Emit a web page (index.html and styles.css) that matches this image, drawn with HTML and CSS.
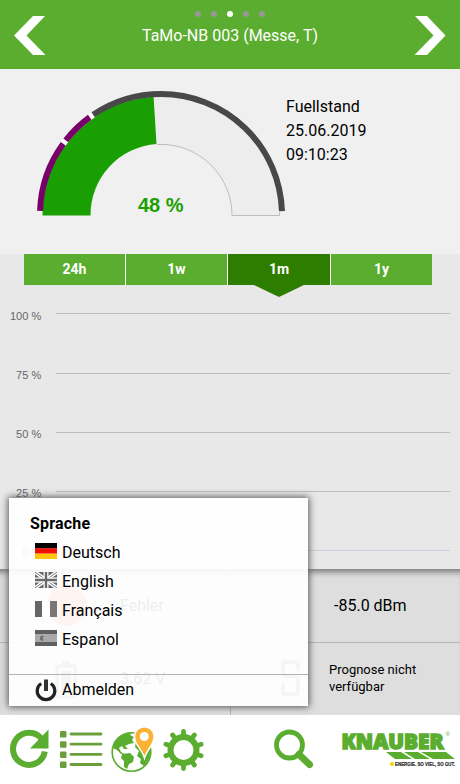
FILE: index.html
```html
<!DOCTYPE html>
<html lang="de">
<head>
<meta charset="utf-8">
<title>TaMo-NB 003</title>
<link rel="stylesheet" href="styles.css">
</head>
<body>
<header class="top">
  <svg class="arrow" viewBox="0 0 32 39"><path d="M19 0H31L12.500 19.500 31.500 39H19L0 19.500Z"/></svg>
  <div class="heading">
    <div class="dots"><i></i><i></i><i class="on"></i><i></i><i></i></div>
    <h1>TaMo-NB 003 (Messe, T)</h1>
  </div>
  <svg class="arrow" viewBox="0 0 32 39"><path d="M13 0H1L19.500 19.500 .5 39H13L31.500 19.500Z"/></svg>
</header>
<section class="level">
  <svg class="gauge" viewBox="0 0 256 140">
    <path d="M242 130A118 118 0 0 0 116.600 12.200L119.500 59.100A71 71 0 0 1 195 130.500H242" fill="#ededed"/>
    <path d="M120 59.500A71 71 0 0 1 195 130.500H242.500V127" fill="none" stroke="#bdbdbd"/>
    <path d="M5.500 130A118.500 118.500 0 0 1 116.600 11.700L119.500 59.100A71 71 0 0 0 53.500 130V130.500H5.500Z" fill="#1a9f02"/>
    <g fill="none" stroke-width="6">
      <path class="gap" d="M3 130A121 121 0 0 1 245 130" pathLength="180" stroke-dasharray="0 35 22 200"/>
      <path class="low" d="M3 130A121 121 0 0 1 245 130" pathLength="180" stroke-dasharray="0 2 34.100 2 15.800 200"/>
      <path class="ok" d="M3 130A121 121 0 0 1 245 130" pathLength="180" stroke-dasharray="0 55.900 122.200 200"/>
    </g>
    <text x="123.700" y="127" text-anchor="middle" class="percent">48 %</text>
  </svg>
  <div class="stamp">Fuellstand<br>25.06.2019<br>09:10:23</div>
</section>
<section class="history">
  <nav class="tabs"><span>24h</span><span>1w</span><span class="active">1m</span><span>1y</span></nav>
  <svg class="chart" viewBox="0 0 460 284">
    <g stroke="#bcbcbc"><path d="M56 28.500H450M56 88.500H450M56 147.500H450M56 206.500H450"/><path d="M56 265.500H450" stroke="#c8cedb"/></g>
    <g class="scale" text-anchor="end"><text x="41.200" y="35">100 %</text><text x="41.200" y="94">75 %</text><text x="41.200" y="153">50 %</text><text x="41.200" y="212">25 %</text><text x="41.200" y="271">0 %</text></g>
  </svg>
</section>
<section class="status">
  <div class="cell"><svg class="lamp" viewBox="0 0 44 44"><circle cx="22" cy="22" r="20"/></svg><span>Fehler</span></div>
  <div class="cell signal"><span>-85.0 dBm</span></div>
  <div class="cell"><svg class="battery" viewBox="0 0 22 38"><path d="M2 5H20V36H2ZM7 2H15" fill="none" stroke="#777" stroke-width="3"/><path d="M6 10H16V32H6Z" fill="#777"/></svg><span>3.62 V</span></div>
  <div class="cell forecast"><svg class="loop" viewBox="0 0 20 36"><path d="M17 11V5Q17 2 14 2H5Q2 2 2 5V13Q2 16 5 16H14Q17 16 17 19V31Q17 34 14 34H5Q2 34 2 31V23" fill="none" stroke="#777" stroke-width="4"/></svg><span>Prognose nicht<br>verfügbar</span></div>
</section>
<aside class="menu">
  <div class="languages">
    <h2>Sprache</h2>
    <div class="item"><svg class="flag" viewBox="0 0 22 16"><path fill="#000" d="M0 0h22v5.500H0z"/><path fill="#f01008" d="M0 5.300h22v5.400H0z"/><path fill="#fdc60b" d="M0 10.700h22V16H0z"/></svg>Deutsch</div>
    <div class="item"><svg class="flag" viewBox="0 0 22 16"><path fill="#666" d="M0 0h22v16H0z"/><path stroke="#fff" stroke-width="3.600" d="M0 0 22 16M22 0 0 16"/><path stroke="#777" d="M0 0 22 16M22 0 0 16"/><path stroke="#fff" stroke-width="5" d="M11 0V16M0 8H22"/><path stroke="#686868" stroke-width="2.400" d="M11 0V16M0 8H22"/></svg>English</div>
    <div class="item"><svg class="flag" viewBox="0 0 22 16"><path fill="#fff" d="M7 0h8v16H7z"/><path fill="#666" d="M0 0h7v16H0z"/><path fill="#7a7675" d="M15 0h7v16h-7z"/></svg>Français</div>
    <div class="item"><svg class="flag" viewBox="0 0 22 16"><path fill="#a9a9a9" d="M0 0h22v16H0z"/><path fill="#606060" d="M0 0h22v4H0zM0 12h22v4H0z"/><path d="M8.500 6.500H6V10H8.500M5.500 8.300H8" fill="none" stroke="#555"/></svg>Espanol</div>
  </div>
  <div class="item logout"><svg class="power" viewBox="0 0 22 23"><path d="M6.200 4.500A8.800 8.800 0 1 0 15.800 4.500" fill="none" stroke="#222" stroke-width="3.200"/><path d="M11 .5V12" stroke="#333" stroke-width="4"/></svg>Abmelden</div>
</aside>
<footer class="bar">
  <svg class="tools" viewBox="0 0 330 69">
    <g fill="#5bad2f">
      <path d="M42 24.500A16 16 0 1 0 44.800 36.500" fill="none" stroke="#5bad2f" stroke-width="6"/>
      <path d="M48.500 14.500V33.500H30Z"/>
      <g fill="#6a9f3c"><rect x="60" y="16" width="6.500" height="6.500" rx="1"/><rect x="60" y="26.200" width="6.500" height="6.500" rx="1"/><rect x="60" y="36.400" width="6.500" height="6.500" rx="1"/><rect x="60" y="46.500" width="6.500" height="6.500" rx="1"/></g>
      <path d="M71 19H101M71 29.200H101M71 39.400H101M71 49.500H101" stroke="#6a9f3c" stroke-width="2.800" stroke-linecap="round"/>
      <circle cx="131.500" cy="37" r="19.300" fill="#fff" stroke="#5bad2f" stroke-width="1.600"/>
      <path d="M113 33C114 25 121 18 132 17.500L130 20 134 22 132 25 134 28 129 29 125 31 128 34 124 34 122 31 119 33 121 37 124 39 121 39 117 35Z"/>
      <path d="M122 39 130 38 134 42 133 47 129 49 127 54 124 52 124 46 121 43Z"/>
      <path d="M136 27 141 29 146 38 150 34Q151 44 144 51L140 48 141 44 137 41 139 36 135 32Z"/>
      <path d="M144.500 43C142 34 134.500 30 134.500 21.500A9.800 9.800 0 0 1 154.100 21.500C154.100 30 147 34 144.500 43Z" fill="#f9b233" stroke="#fff" stroke-width="1.500"/>
      <circle cx="144.300" cy="21.500" r="4.500" fill="#fff"/>
      <circle cx="183.500" cy="35" r="13" fill="none" stroke="#5bad2f" stroke-width="6"/>
      <g stroke="#5bad2f" stroke-width="4.800" stroke-linecap="round">
        <path id="tooth" d="M183.500 21V16.500M183.500 49V53.500"/>
        <use href="#tooth" transform="rotate(36 183.500 35)"/><use href="#tooth" transform="rotate(72 183.500 35)"/><use href="#tooth" transform="rotate(108 183.500 35)"/><use href="#tooth" transform="rotate(144 183.500 35)"/>
      </g>
      <circle cx="289.500" cy="30" r="13" fill="none" stroke="#5bad2f" stroke-width="4.800"/>
      <path d="M299 39.500 309.500 49.500" stroke="#5bad2f" stroke-width="7" stroke-linecap="round"/>
    </g>
  </svg>
  <svg class="brand" viewBox="330 0 130 69">
    <text class="name" x="341.500" y="33.500" textLength="102" lengthAdjust="spacingAndGlyphs">KNAUBER</text>
    <text class="reg" x="445.500" y="14">®</text>
    <path d="M386 37H401L412 44H395ZM404 37H418L430 44H415ZM421 37H446L455 44H433Z" fill="#5bad2f"/>
    <circle cx="392" cy="49" r="2" fill="#f4d400"/>
    <text class="claim" x="395" y="51" textLength="60" lengthAdjust="spacingAndGlyphs">ENERGIE. SO VIEL, SO GUT.</text>
  </svg>
</footer>
</body>
</html>
```
FILE: styles.css
```css
* { box-sizing: border-box; }
body { margin: 0; width: 460px; height: 784px; overflow: hidden; position: relative; display: flex; flex-direction: column; background: #f0f0f0; color: #000; font: 16px/24px Roboto, sans-serif; }
svg { display: block; flex: none; }
.top { height: 69px; flex: none; background: #5bad2f; display: flex; justify-content: space-between; padding: 0 14px; color: #fff; }
.arrow { width: 32px; height: 39px; margin-top: 16px; fill: #fff; }
.heading { text-align: center; }
.dots { display: flex; justify-content: center; gap: 10px; padding-top: 11px; }
.dots i { width: 6px; height: 6px; border-radius: 50%; background: #969696; }
.dots .on { background: #fff; }
h1 { margin: 7px 0 0; font-size: 16px; line-height: 24px; font-weight: 400; }
.level { height: 185px; flex: none; display: flex; padding: 16px 0 0 37px; background: #f0f0f0; }
.gauge { width: 256px; height: 140px; }
.stamp { margin: 10px 0 0 -7px; }
.low { stroke: #780068; }
.ok { stroke: #484848; }
.gap { stroke: #fff; }
.percent { font: bold 20px "Liberation Sans", sans-serif; fill: #1a9f02; }
.history { height: 315px; flex: none; background: #e8e8e8; }
.tabs { display: grid; grid-template-columns: 101px 101px 102px 101px; gap: 1px; width: 408px; height: 31px; margin-left: 24px; background: #fff; color: #fff; font-weight: 700; font-size: 14px; line-height: 31px; text-align: center; }
.tabs span { background: #5bad2f; }
.tabs .active { background: #2d7d00; position: relative; }
.tabs .active::after { content: ""; position: absolute; top: 31px; left: 26px; border: solid transparent; border-width: 12px 25px 0; border-top-color: #2d7d00; }
.chart { width: 460px; height: 284px; }
.scale { font: 11px "Liberation Sans", sans-serif; fill: #666; }
.status { height: 146px; flex: none; display: grid; grid-template: 74px 72px / 231px 229px; background: #dedede; box-shadow: inset 0 8px 6px -5px #777; }
.cell { display: flex; align-items: center; border-bottom: 1px solid #b5b5b5; border-right: 1px solid #b5b5b5; padding-left: 45px; }
.signal { padding-left: 103px; border-right: 0; }
.forecast { padding: 0 0 2px 50px; border-right: 0; font-size: 13px; line-height: 17px; }
.cell:nth-child(n+3) { border-bottom: 0; }
.lamp { width: 44px; height: 44px; fill: #f07050; margin-right: 31px; }
.battery { width: 22px; height: 38px; margin: 2px 43px 0 10px; }
.loop { width: 20px; height: 36px; margin-right: 28px; }
.menu { position: absolute; left: 9px; top: 498px; width: 299px; height: 208px; display: flex; flex-direction: column; background: rgba(255, 255, 255, .93); box-shadow: 0 0 7px 1px #555; }
.languages { height: 177px; padding: 11px 0 0 21px; border-bottom: 1px solid #b3b3b3; }
h2 { margin: 0; height: 29px; font-size: 16px; line-height: 29px; font-weight: 700; letter-spacing: .2px; }
.item { display: flex; height: 29px; line-height: 29px; padding-left: 5px; gap: 5px; }
.flag { width: 22px; height: 16px; margin-top: 5px; }
.logout { padding-left: 26px; }
.power { width: 22px; height: 23px; margin-top: 4px; }
.bar { height: 69px; flex: none; display: flex; background: #fff; }
.tools { width: 330px; height: 69px; }
.brand { width: 130px; height: 69px; }
.name { font: 800 20.5px "Open Sans", sans-serif; fill: #5bad2f; stroke: #5bad2f; stroke-width: 1.5; }
.reg { font: 6px "Liberation Sans", sans-serif; fill: #5bad2f; }
.reg { transform: translateY(7px); }
.claim { font: bold 5px "Liberation Sans", sans-serif; fill: #222; stroke: #222; stroke-width: .15; }
```
